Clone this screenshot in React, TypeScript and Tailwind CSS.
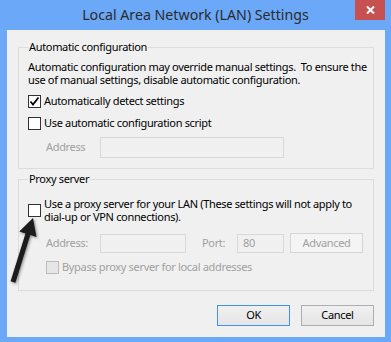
import React from "react";

const font = { fontFamily: '"Noto Sans", "Open Sans", sans-serif' };

const CheckBox = ({ checked = false, disabled = false }: { checked?: boolean; disabled?: boolean }) => (
  <span
    className={`flex h-[13px] w-[13px] shrink-0 items-center justify-center border ${
      disabled ? "border-[#bcbcbc] bg-[#e6e6e6]" : "border-[#333333] bg-white"
    }`}
  >
    {checked && (
      <svg width="11" height="11" viewBox="0 0 11 11">
        <path d="M1.5 5.5 L4 8.5 L9.5 1.5" fill="none" stroke="#000" strokeWidth="1.8" />
      </svg>
    )}
  </span>
);

const Group = ({ title, children, className = "" }: { title: string; children: React.ReactNode; className?: string }) => (
  <fieldset className={`min-w-0 border border-[#dcdcdc] px-[9px] ${className}`}>
    <legend className="px-[1px] leading-[16px] text-black">{title}</legend>
    {children}
  </fieldset>
);

export default function App() {
  return (
    <div
      className="relative flex h-[342px] w-[391px] flex-col overflow-hidden whitespace-nowrap bg-[#6ba8f7] text-[11px] tracking-[-0.33px] text-black"
      style={font}
    >
      {/* title bar */}
      <div className="relative flex h-[30px] shrink-0 items-center justify-center">
        <span className="text-[14.2px] leading-[20px] tracking-normal text-[#2b2b2b]">Local Area Network (LAN) Settings</span>
        <div className="absolute right-[6px] top-0 flex h-[20px] w-[30px] items-center justify-center bg-[#c75050]">
          <svg width="9" height="8" viewBox="0 0 9 8">
            <path d="M1 0.5 L8 7.5 M8 0.5 L1 7.5" stroke="#fff" strokeWidth="2" />
          </svg>
        </div>
      </div>

      {/* client */}
      <div className="ml-[7px] flex h-[307px] w-[378px] shrink-0 flex-col bg-[#f0f0f0] px-[11px] pt-[9px]">
        <Group title="Automatic configuration" className="pb-[10px]">
          <p className="mt-[5px] leading-[13px]">
            Automatic configuration may override manual settings.{"\u00a0"} To ensure the
            <br />
            use of manual settings, disable automatic configuration.
          </p>
          <label className="mt-[7px] flex h-[16px] items-center gap-[3px]">
            <CheckBox checked />
            <span>Automatically detect settings</span>
          </label>
          <label className="mt-[6px] flex h-[16px] items-center gap-[3px]">
            <CheckBox />
            <span>Use automatic configuration script</span>
          </label>
          <div className="mt-[6px] flex h-[21px] items-center pl-[18px]">
            <span className="w-[54px] text-[#a0a0a0]">Address</span>
            <div className="h-[21px] w-[184px] border border-[#d9d9d9] bg-[#f0f0f0]" />
          </div>
        </Group>

        <Group title="Proxy server" className="mt-[2px] pb-[15px]">
          <label className="mt-[10px] flex items-center gap-[3px]">
            <CheckBox />
            <span className="leading-[13px]">
              Use a proxy server for your LAN (These settings will not apply to
              <br />
              dial-up or VPN connections).
            </span>
          </label>
          <div className="mt-[10px] flex h-[20px] items-center pl-[18px]">
            <span className="w-[54px] text-[#a0a0a0]">Address:</span>
            <div className="h-[19px] w-[86px] border border-[#d9d9d9]" />
            <span className="ml-[16px] w-[35px] text-[#a0a0a0]">Port:</span>
            <div className="flex h-[19px] w-[47px] items-center border border-[#d9d9d9] pl-[5px] text-[#a0a0a0]">
              80
            </div>
            <div className="ml-[6px] flex h-[20px] w-[73px] items-center justify-center border border-[#d5d5d5] bg-[#f4f4f4] text-[#a0a0a0]">
              Advanced
            </div>
          </div>
          <label className="mt-[6px] flex h-[16px] items-center gap-[3px] pl-[18px]">
            <CheckBox disabled />
            <span className="text-[#a0a0a0]">Bypass proxy server for local addresses</span>
          </label>
        </Group>

        <div className="mt-[14px] flex justify-end gap-[11px]">
          <button className="flex h-[21px] w-[73px] items-center justify-center border border-[#3c94ec] bg-gradient-to-b from-[#f0f0f0] to-[#e5e5e5] text-black">
            OK
          </button>
          <button className="flex h-[21px] w-[73px] items-center justify-center border border-[#adadad] bg-gradient-to-b from-[#f0f0f0] to-[#e5e5e5] text-black">
            Cancel
          </button>
        </div>
      </div>

      {/* annotation arrow */}
      <svg className="absolute left-0 top-0" width="60" height="300" viewBox="0 0 60 300">
        <defs>
          <filter id="sh" x="-50%" y="-50%" width="200%" height="200%">
            <feDropShadow dx="1" dy="1" stdDeviation="1.5" floodColor="#000" floodOpacity="0.45" />
          </filter>
        </defs>
        <polygon
          points="33,218 36.5,236.9 30.3,235 15.4,282.8 10.6,281.2 25.5,233.4 19.3,231.5"
          fill="#1c1c1c"
          filter="url(#sh)"
        />
      </svg>
    </div>
  );
}
